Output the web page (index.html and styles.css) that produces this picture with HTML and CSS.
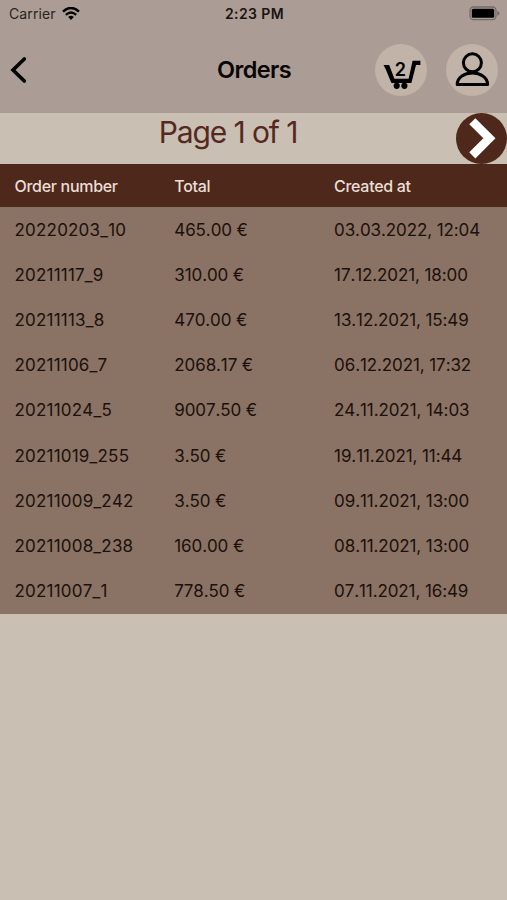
FILE: index.html
```html
<!DOCTYPE html>
<html lang="en">
  <head>
    <meta charset="UTF-8" />
    <meta name="viewport" content="width=device-width, initial-scale=1.0" />
    <title>Orders</title>
    <link rel="stylesheet" href="styles.css">
  </head>

  <body>
    <!-- status bar -->
    <div class="statusBar">
      <div class="carrier">
        <span class="carrierName">Carrier</span>
        <svg class="wifi" width="18" height="14" viewBox="0 0 18 14">
          <path d="M1 4.6Q9 -2.6 17 4.6" fill="none" stroke="#000" stroke-width="2.5" />
          <path d="M3.8 7.8Q9 3.2 14.2 7.8" fill="none" stroke="#000" stroke-width="2.3" />
          <path d="M6.2 10Q9 7.6 11.8 10L9 13Z" />
        </svg>
      </div>
      <span class="time">2:23 PM</span>
      <div class="battery">
        <svg width="31" height="15" viewBox="0 0 31 15">
          <rect x="1" y="1" width="26" height="12.6" rx="3.5" fill="none" stroke="#756b67" stroke-width="1.3" />
          <rect x="2.8" y="2.8" width="22.4" height="9" rx="1.5" />
          <path d="M28.3 4.8Q30.5 5.8 30.5 7.3T28.3 9.8Z" fill="#756b67" />
        </svg>
      </div>
    </div>

    <!-- header -->
    <div class="header">
      <button class="backBtn">
        <svg width="16" height="26" viewBox="0 0 16 26">
          <path d="M14.3 2L3 13L14.3 24" fill="none" stroke="#000" stroke-width="3.6" stroke-linecap="round" />
        </svg>
      </button>
      <h1 class="title">Orders</h1>
      <div class="actions">
        <button class="roundBtn">
          <svg width="52" height="52" viewBox="0 0 52 52">
            <path d="M8.5 21H14.2L19.4 34.8H33.6L37.6 16.8H45.4V21H41L36.4 39H16.4L10.6 25Z" />
            <circle cx="21.7" cy="41.8" r="3.1" />
            <circle cx="29.4" cy="41.8" r="3.1" />
            <text class="cartCount" x="25.3" y="32">2</text>
          </svg>
        </button>
        <button class="roundBtn">
          <svg width="52" height="52" viewBox="0 0 52 52">
            <circle cx="26.4" cy="18.8" r="9" fill="none" stroke="#000" stroke-width="3" />
            <path d="M11.2 40.5C11.2 25.3 41.6 25.3 41.6 40.5Z" fill="none" stroke="#000" stroke-width="3" stroke-linejoin="round" />
          </svg>
        </button>
      </div>
    </div>

    <!-- pagination -->
    <div class="pager">
      <span class="pageText">Page 1 of 1</span>
      <button class="nextBtn">
        <svg width="51" height="51" viewBox="0 0 51 51">
          <path d="M16.3 8.2L33.4 25.3L16.3 42.4" fill="none" stroke="#fff" stroke-width="8.6" />
        </svg>
      </button>
    </div>

    <!-- orders -->
    <table class="orders">
      <thead>
        <tr><th class="number">Order number</th><th class="total">Total</th><th>Created at</th></tr>
      </thead>
      <tbody>
        <tr><td class="number">20220203_10</td><td class="total">465.00 €</td><td>03.03.2022, 12:04</td></tr>
        <tr><td class="number">20211117_9</td><td class="total">310.00 €</td><td>17.12.2021, 18:00</td></tr>
        <tr><td class="number">20211113_8</td><td class="total">470.00 €</td><td>13.12.2021, 15:49</td></tr>
        <tr><td class="number">20211106_7</td><td class="total">2068.17 €</td><td>06.12.2021, 17:32</td></tr>
        <tr><td class="number">20211024_5</td><td class="total">9007.50 €</td><td>24.11.2021, 14:03</td></tr>
        <tr><td class="number">20211019_255</td><td class="total">3.50 €</td><td>19.11.2021, 11:44</td></tr>
        <tr><td class="number">20211009_242</td><td class="total">3.50 €</td><td>09.11.2021, 13:00</td></tr>
        <tr><td class="number">20211008_238</td><td class="total">160.00 €</td><td>08.11.2021, 13:00</td></tr>
        <tr><td class="number">20211007_1</td><td class="total">778.50 €</td><td>07.11.2021, 16:49</td></tr>
      </tbody>
    </table>
  </body>
</html>
```

FILE: styles.css
```css
body {
  margin: 0;
  padding: 0;
  min-height: 100vh;
  background: #c9bfb3;
  font-family: Inter, "Liberation Sans", sans-serif;
  color: #1b100b;
}

button {
  display: block;
  padding: 0;
  background: transparent;
  outline: none;
  border: none;
}

svg {
  display: block;
}

.statusBar {
  display: grid;
  grid-template-columns: 1fr auto 1fr;
  align-items: center;
  height: 27px;
  padding: 0 7px 0 9px;
  background: #ab9d95;
  font-size: 14px;
}

.carrier {
  display: flex;
  align-items: center;
  gap: 6px;
}

.carrierName {
  color: #2a2421;
  letter-spacing: 0.1px;
}

.time {
  font-weight: 600;
  letter-spacing: 0.4px;
  color: #1a1411;
}

.battery {
  display: flex;
  justify-content: flex-end;
}

.header {
  display: grid;
  grid-template-columns: 1fr auto 1fr;
  align-items: center;
  height: 86px;
  padding: 0 9px 1px 10px;
  box-sizing: border-box;
  background: #ab9d95;
}

.title {
  margin: 0;
  font-size: 23.5px;
  font-weight: 600;
  letter-spacing: -0.6px;
  color: #080504;
}

.actions {
  display: flex;
  justify-content: flex-end;
  gap: 19px;
}

.roundBtn {
  width: 52px;
  height: 52px;
  border-radius: 50%;
  background: #c1b3a7;
}

.cartCount {
  font-family: Inter, "Liberation Sans", sans-serif;
  font-size: 18px;
  font-weight: 600;
  text-anchor: middle;
}

.pager {
  display: flex;
  height: 51px;
}

.pageText {
  flex: 1;
  text-align: center;
  line-height: 39px;
  font-size: 30px;
  letter-spacing: -1.1px;
  color: #55291f;
}

.nextBtn {
  width: 51px;
  height: 51px;
  border-radius: 50%;
  background: #4e281b;
}

.orders {
  width: 100%;
  table-layout: fixed;
  border-collapse: collapse;
  background: #8a7264;
}

.orders th,
.orders td {
  padding: 0 0 0 14.5px;
  text-align: left;
  white-space: nowrap;
}

.orders th {
  height: 43px;
  background: #4e281b;
  color: #eaded6;
  font-size: 16px;
  font-weight: 500;
  letter-spacing: -0.3px;
}

.orders th.number,
.orders th.total {
  width: 145.3px;
}

.orders td {
  height: 45.2px;
  font-size: 17px;
  font-kerning: none;
  letter-spacing: -0.1px;
}

.orders td.number {
  letter-spacing: 0.2px;
}
```
